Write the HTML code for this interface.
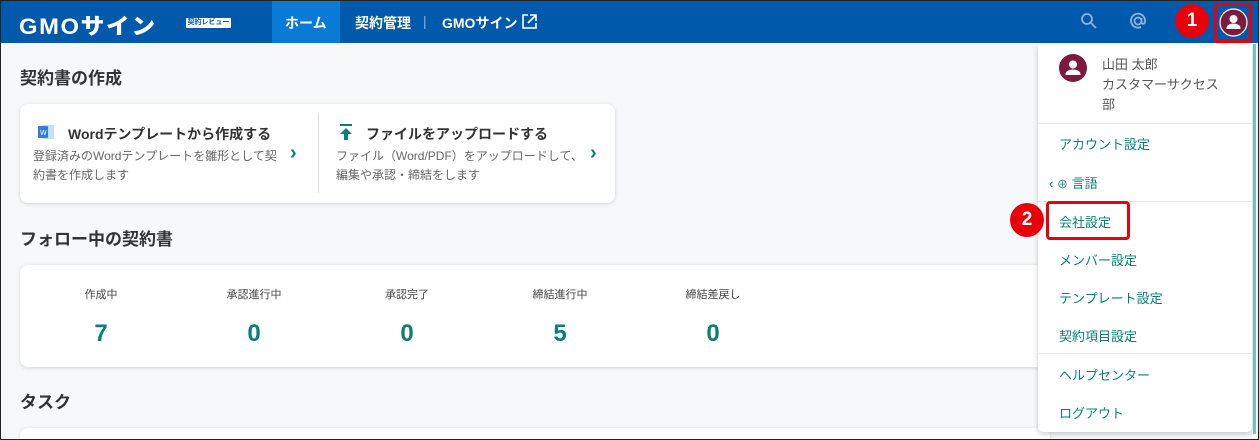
<!DOCTYPE html>
<html style="width:1259px;height:440px;overflow:hidden"><head><meta charset="utf-8"><style>
*{margin:0;padding:0;box-sizing:border-box}
body{width:1259px;height:440px;overflow:hidden;background:#f7f8fa;font-family:"Liberation Sans","Noto Sans CJK JP",sans-serif;position:relative}
.frame{position:absolute;left:0;top:0;width:1259px;height:440px;border:1px solid #222;z-index:10;pointer-events:none}
.hdr{position:absolute;left:0;top:0;width:1259px;height:43px;background:#0059ab}
.abs{position:absolute;white-space:nowrap}
.h2{font-size:17px;font-weight:bold;color:#333}
.card{position:absolute;background:#fff;border-radius:8px;box-shadow:0 1px 4px rgba(0,0,0,.15)}
.ct{font-size:14px;font-weight:bold;color:#333}
.cd{font-size:12px;color:#666;line-height:19px}
.chev{color:#0a7f76;font-size:20px;font-weight:bold}
.lab{font-size:11px;color:#444;text-align:center;width:100px}
.num{font-size:24px;font-weight:bold;color:#0a7f76;text-align:center;width:100px}
.menu{position:absolute;left:1038px;top:44px;width:214px;height:388px;background:#fff;border-radius:0 0 5px 5px;box-shadow:0 2px 6px rgba(0,0,0,.2)}
.mi{position:absolute;left:21px;font-size:13px;color:#0a7f76;white-space:nowrap}
.sep{position:absolute;left:0;width:214px;height:1px;background:#e6e8ec}
.badge{position:absolute;width:34px;height:34px;border-radius:50%;background:#e8000b;color:#fff;font-weight:bold;font-size:19px;text-align:center;line-height:34px}
</style></head><body>
<div class="frame"></div>
<div class="hdr"></div>
<div class="abs" style="left:19px;top:9px;font-size:22px;font-weight:900;color:#fff;letter-spacing:1.5px;transform:scaleX(1.08);transform-origin:left">GMOサイン</div>
<div class="abs" style="left:186px;top:18px;width:45px;height:10px;background:#fff;border-radius:1px;font-size:7px;color:#0059ab;line-height:10px;text-align:center;font-weight:bold">契約レビュー</div>
<div class="abs" style="left:272px;top:0;width:68px;height:43px;background:#0a7ad7"></div>
<div class="abs" style="left:285px;top:13px;font-size:14px;font-weight:bold;color:#fff">ホーム</div>
<div class="abs" style="left:355px;top:13px;font-size:14px;font-weight:bold;color:#fff">契約管理</div>
<div class="abs" style="left:423px;top:13px;font-size:14px;color:#8fb3dc">|</div>
<div class="abs" style="left:442px;top:13px;font-size:14px;font-weight:bold;color:#fff">GMOサイン</div>
<svg class="abs" style="left:521px;top:13px" width="17" height="17" viewBox="0 0 17 17" fill="none" stroke="#fff" stroke-width="1.6"><path d="M7 2H2v13h13v-5"/><path d="M9 2h6v6M15 2L7 10"/></svg>
<svg class="abs" style="left:1080px;top:12px" width="18" height="18" viewBox="0 0 18 18" fill="none" stroke="#8fb3dc" stroke-width="1.8"><circle cx="7" cy="7" r="5"/><path d="M11 11l5 5"/></svg>
<svg class="abs" style="left:1128px;top:11px" width="20" height="20" viewBox="0 0 20 20" fill="none" stroke="#8fb3dc" stroke-width="1.8"><circle cx="10" cy="10" r="3.5"/><path d="M13.5 7v4.5c0 2 3.5 2 3.5-1.5A7 7 0 1 0 13 16"/></svg>
<div class="badge" style="left:1175px;top:4px">1</div>
<div class="abs" style="left:1214px;top:3px;width:38px;height:40px;border:3px solid #e8000b;border-radius:3px"></div>
<svg class="abs" style="left:1219px;top:8px" width="29" height="29" viewBox="0 0 29 29"><circle cx="14.5" cy="14.5" r="13.5" fill="#7d1a3d" stroke="#fff" stroke-width="1.2"/><circle cx="14.5" cy="11" r="4" fill="#fff"/><path d="M7.5 20c0-3 4-4.5 7-4.5s7 1.5 7 4.5v1h-14z" fill="#fff"/></svg>

<div class="abs h2" style="left:20px;top:64px">契約書の作成</div>
<div class="card" style="left:20px;top:104px;width:595px;height:99px"></div>
<div class="abs" style="left:318px;top:113px;width:1px;height:80px;background:#ddd"></div>
<svg class="abs" style="left:38px;top:124px" width="17" height="16" viewBox="0 0 17 16"><rect x="4" y="1" width="12" height="14" rx="1" fill="#c9def5"/><rect x="0" y="2" width="10" height="12" rx="1" fill="#2f7fd3"/><text x="2" y="11" font-size="7" fill="#fff" font-family="Liberation Sans">W</text></svg>
<div class="abs ct" style="left:68px;top:124px">Wordテンプレートから作成する</div>
<div class="abs cd" style="left:33px;top:147px">登録済みのWordテンプレートを雛形として契<br>約書を作成します</div>
<div class="abs chev" style="left:290px;top:142px">›</div>
<svg class="abs" style="left:338px;top:124px" width="16" height="17" viewBox="0 0 16 17"><rect x="2" y="0" width="12" height="2" fill="#0a7f76"/><path d="M8 4l6 6h-4v6H6v-6H2z" fill="#0a7f76"/></svg>
<div class="abs ct" style="left:366px;top:124px">ファイルをアップロードする</div>
<div class="abs cd" style="left:336px;top:147px">ファイル（Word/PDF）をアップロードして、<br>編集や承認・締結をします</div>
<div class="abs chev" style="left:590px;top:142px">›</div>

<div class="abs h2" style="left:20px;top:225px">フォロー中の契約書</div>
<div class="card" style="left:20px;top:265px;width:1030px;height:102px"></div>
<div class="abs lab" style="left:51px;top:286px">作成中</div>
<div class="abs lab" style="left:204px;top:286px">承認進行中</div>
<div class="abs lab" style="left:357px;top:286px">承認完了</div>
<div class="abs lab" style="left:510px;top:286px">締結進行中</div>
<div class="abs lab" style="left:663px;top:286px">締結差戻し</div>
<div class="abs num" style="left:51px;top:320px">7</div>
<div class="abs num" style="left:204px;top:320px">0</div>
<div class="abs num" style="left:357px;top:320px">0</div>
<div class="abs num" style="left:510px;top:320px">5</div>
<div class="abs num" style="left:663px;top:320px">0</div>

<div class="abs h2" style="left:20px;top:388px">タスク</div>
<div class="card" style="left:20px;top:428px;width:1030px;height:20px"></div>

<div class="abs" style="left:1253px;top:44px;width:3px;height:390px;background:#7cc7c0"></div>
<div class="menu">
<svg style="position:absolute;left:21px;top:10px" width="28" height="28" viewBox="0 0 28 28"><circle cx="14" cy="14" r="14" fill="#7d1a3d"/><circle cx="14" cy="10.5" r="4" fill="#fff"/><path d="M6.5 20c0-3 4.5-4.5 7.5-4.5s7.5 1.5 7.5 4.5v1h-15z" fill="#fff"/></svg>
<div class="mi" style="left:64px;top:11px;color:#555;line-height:20px;white-space:normal;width:140px">山田 太郎<br>カスタマーサクセス<br>部</div>
<div class="sep" style="top:79px"></div>
<div class="mi" style="top:90px">アカウント設定</div>
<div class="mi" style="left:11px;top:129px">‹ <span style="font-size:11px">⊕</span> 言語</div>
<div class="sep" style="top:157px"></div>
<div class="mi" style="top:168px">会社設定</div>
<div class="mi" style="top:206px">メンバー設定</div>
<div class="mi" style="top:244px">テンプレート設定</div>
<div class="mi" style="top:282px">契約項目設定</div>
<div class="sep" style="top:309px"></div>
<div class="mi" style="top:321px">ヘルプセンター</div>
<div class="mi" style="top:359px">ログアウト</div>
</div>
<div class="abs" style="left:1046px;top:201px;width:84px;height:39px;border:3px solid #e8000b;border-radius:4px"></div>
<div class="badge" style="left:1010px;top:203px">2</div>
</body></html>
